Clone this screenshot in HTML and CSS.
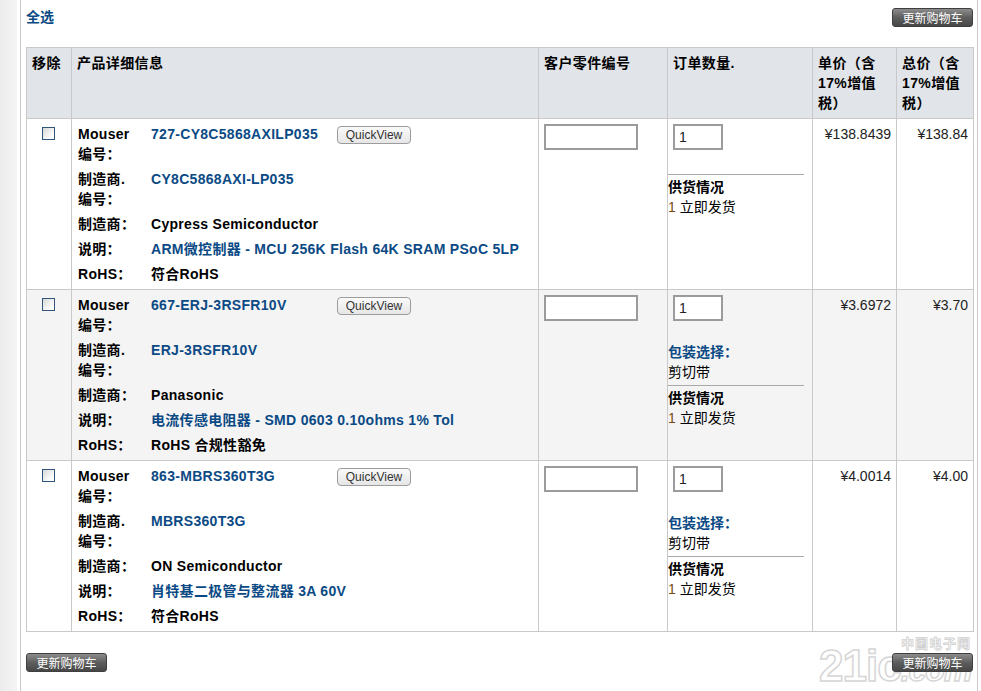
FILE: index.html
```html
<!DOCTYPE html>
<html lang="zh-CN">
<head>
<meta charset="utf-8">
<title>购物车</title>
<link rel="stylesheet" href="styles.css">
</head>
<body>
<div class="shell">
  <div class="side"></div>
  <div class="page">
    <div class="topbar">
      <a class="selall" href="#">全选</a>
      <button class="upd">更新购物车</button>
    </div>
    <table class="cart">
      <colgroup>
        <col class="c1"><col class="c2"><col class="c3"><col class="c4"><col class="c5"><col class="c6">
      </colgroup>
      <thead>
        <tr>
          <th>移除</th>
          <th>产品详细信息</th>
          <th>客户零件编号</th>
          <th>订单数量.</th>
          <th>单价（含17%增值税）</th>
          <th>总价（含17%增值税）</th>
        </tr>
      </thead>
      <tbody>
        <tr>
          <td class="sel"><input type="checkbox" class="chk"></td>
          <td class="info">
            <div class="det">
              <span class="lbl">Mouser <span class="nw">编号：</span></span>
              <a class="val" href="#">727-CY8C5868AXILP035</a>
              <span class="qvcell"><button class="qv">QuickView</button></span>
              <span class="lbl"><span class="nw">制造商.</span> <span class="nw">编号：</span></span>
              <a class="val wide" href="#">CY8C5868AXI-LP035</a>
              <span class="lbl">制造商：</span>
              <span class="txt wide">Cypress Semiconductor</span>
              <span class="lbl">说明：</span>
              <a class="val wide" href="#">ARM微控制器 - MCU 256K Flash 64K SRAM PSoC 5LP</a>
              <span class="lbl">RoHS：</span>
              <span class="txt wide">符合RoHS</span>
            </div>
          </td>
          <td class="cpn"><input type="text" class="cpn-in"></td>
          <td class="qty">
            <div class="qtybox"><input type="text" class="qty-in" value="1"></div>
            <hr class="sep">
            <div class="avail-h">供货情况</div>
            <div class="avail"><span class="num">1</span> 立即发货</div>
          </td>
          <td class="price">¥138.8439</td>
          <td class="price">¥138.84</td>
        </tr>
        <tr class="alt">
          <td class="sel"><input type="checkbox" class="chk"></td>
          <td class="info">
            <div class="det">
              <span class="lbl">Mouser <span class="nw">编号：</span></span>
              <a class="val" href="#">667-ERJ-3RSFR10V</a>
              <span class="qvcell"><button class="qv">QuickView</button></span>
              <span class="lbl"><span class="nw">制造商.</span> <span class="nw">编号：</span></span>
              <a class="val wide" href="#">ERJ-3RSFR10V</a>
              <span class="lbl">制造商：</span>
              <span class="txt wide">Panasonic</span>
              <span class="lbl">说明：</span>
              <a class="val wide" href="#">电流传感电阻器 - SMD 0603 0.10ohms 1% Tol</a>
              <span class="lbl">RoHS：</span>
              <span class="txt wide">RoHS 合规性豁免</span>
            </div>
          </td>
          <td class="cpn"><input type="text" class="cpn-in"></td>
          <td class="qty">
            <div class="qtybox"><input type="text" class="qty-in" value="1"></div>
            <div class="pack-h">包装选择：</div>
            <div class="pack">剪切带</div>
            <hr class="sep">
            <div class="avail-h">供货情况</div>
            <div class="avail"><span class="num">1</span> 立即发货</div>
          </td>
          <td class="price">¥3.6972</td>
          <td class="price">¥3.70</td>
        </tr>
        <tr>
          <td class="sel"><input type="checkbox" class="chk"></td>
          <td class="info">
            <div class="det">
              <span class="lbl">Mouser <span class="nw">编号：</span></span>
              <a class="val" href="#">863-MBRS360T3G</a>
              <span class="qvcell"><button class="qv">QuickView</button></span>
              <span class="lbl"><span class="nw">制造商.</span> <span class="nw">编号：</span></span>
              <a class="val wide" href="#">MBRS360T3G</a>
              <span class="lbl">制造商：</span>
              <span class="txt wide">ON Semiconductor</span>
              <span class="lbl">说明：</span>
              <a class="val wide" href="#">肖特基二极管与整流器 3A 60V</a>
              <span class="lbl">RoHS：</span>
              <span class="txt wide">符合RoHS</span>
            </div>
          </td>
          <td class="cpn"><input type="text" class="cpn-in"></td>
          <td class="qty">
            <div class="qtybox"><input type="text" class="qty-in" value="1"></div>
            <div class="pack-h">包装选择：</div>
            <div class="pack">剪切带</div>
            <hr class="sep">
            <div class="avail-h">供货情况</div>
            <div class="avail"><span class="num">1</span> 立即发货</div>
          </td>
          <td class="price">¥4.0014</td>
          <td class="price">¥4.00</td>
        </tr>
      </tbody>
    </table>
    <div class="bottombar">
      <button class="upd">更新购物车</button>
      <button class="upd">更新购物车</button>
    </div>
    <div class="watermark">
      <span class="wm-cn">中国电子网</span>
      <span class="wm-big">21ic<i>.com</i></span>
    </div>
  </div>
</div>
</body>
</html>
```

FILE: styles.css
```css
* { box-sizing: border-box; }

html, body {
  margin: 0;
  padding: 0;
  background: #fff;
}

body {
  font-family: "Liberation Sans", "Noto Sans CJK SC", sans-serif;
  font-size: 14px;
  color: #000;
}

.shell {
  display: flex;
  min-height: 691px;
}

.side {
  width: 17px;
  flex: none;
  background: linear-gradient(90deg, #ececec, #f4f4f4);
}

.page {
  position: relative;
  margin-left: 3px;
  width: 958px;
  flex: none;
  border-left: 1px solid #c9c9c9;
  border-right: 1px solid #c9c9c9;
  padding: 0 3px 0 5px;
  overflow: hidden;
}

.topbar {
  height: 47px;
  display: flex;
  justify-content: space-between;
  align-items: flex-start;
  padding-top: 8px;
  padding-right: 1px;
}

.selall {
  color: #0b4a85;
  font-weight: bold;
  text-decoration: none;
  line-height: 18px;
  font-size: 14px;
}

.upd {
  position: relative;
  z-index: 2;
  width: 81px;
  height: 19px;
  padding: 0;
  margin: 0;
  border: 1px solid #3f3f3f;
  border-radius: 3px;
  background: linear-gradient(#8c8c8c, #5e5e5e 50%, #474747);
  color: #fff;
  font-family: "Noto Sans CJK SC", sans-serif;
  font-size: 12px;
  line-height: 16px;
}

.cart {
  width: 948px;
  table-layout: fixed;
  border-collapse: collapse;
  border: 1px solid #c9c9c9;
}

.c1 { width: 45px; }
.c2 { width: 467px; }
.c3 { width: 129px; }
.c4 { width: 145px; }
.c5 { width: 84px; }
.c6 { width: 77px; }

.cart th {
  background: #e1e4e8;
  border: 1px solid #c9c9c9;
  text-align: left;
  vertical-align: top;
  font-weight: bold;
  line-height: 20px;
  padding: 5px 5px 5px 5px;
  font-size: 14px;
  letter-spacing: 0.4px;
}

.cart td {
  border: 1px solid #c9c9c9;
  vertical-align: top;
  padding: 5px;
  line-height: 20px;
}

.cart tr.alt td {
  background: #f4f4f4;
}

.cart td.sel {
  text-align: center;
  padding-left: 3px;
}

.chk {
  appearance: none;
  -webkit-appearance: none;
  width: 13px;
  height: 13px;
  margin: 3px 0 0 0;
  border: 1px solid #2f557c;
  background: linear-gradient(135deg, #d8d8d8, #ffffff 80%);
  display: inline-block;
  vertical-align: top;
}

.cart td.info {
  padding: 5px 5px 5px 6px;
}

.det {
  display: grid;
  grid-template-columns: 73px 186px 1fr;
  row-gap: 5px;
  line-height: 20px;
  font-weight: bold;
  letter-spacing: 0.3px;
}

.lbl {
  color: #000;
}

.nw {
  white-space: nowrap;
}

.val {
  color: #0b4a85;
  text-decoration: none;
}

.txt {
  color: #000;
}

.wide {
  grid-column: 2 / 4;
  white-space: nowrap;
}

.qvcell {
  align-self: start;
}

.qv {
  margin-top: 2px;
  width: 74px;
  height: 18px;
  padding: 0;
  border: 1px solid #9c9c9c;
  border-radius: 4px;
  background: linear-gradient(#fafafa, #e6e6e6);
  color: #333;
  font-family: "Liberation Sans", sans-serif;
  font-size: 12px;
  line-height: 16px;
  letter-spacing: 0;
  font-weight: normal;
}

.cpn-in {
  width: 94px;
  height: 26px;
  margin: 0;
  border: 2px solid #9b9b9b;
  background: #fff;
  display: block;
}

.cart td.qty {
  padding: 5px 8px 5px 0;
}

.qtybox {
  margin-left: 5px;
  padding-bottom: 21px;
}

.qty-in {
  width: 50px;
  height: 26px;
  margin: 0;
  border: 2px solid #9b9b9b;
  background: #fff;
  display: block;
  font-family: "Liberation Sans", sans-serif;
  font-size: 14px;
  padding: 0 4px;
  color: #222;
}

.pack-h {
  color: #0b4a85;
  font-weight: bold;
  line-height: 20px;
}

.pack {
  line-height: 20px;
}

.sep {
  border: 0;
  border-top: 1px solid #aaaaaa;
  height: 0;
  margin: 3px 0 2px 0;
}

.avail-h {
  font-weight: bold;
  line-height: 20px;
}

.avail {
  line-height: 20px;
}

.num {
  color: #7a4a10;
}

.cart td.price {
  text-align: right;
  color: #222;
  padding-right: 5px;
}

.bottombar {
  display: flex;
  justify-content: space-between;
  margin-top: 21px;
  padding-right: 1px;
}

.watermark {
  position: absolute;
  right: 2px;
  bottom: 0;
  z-index: 1;
  width: 160px;
  height: 56px;
  pointer-events: none;
}

.wm-cn {
  position: absolute;
  right: 4px;
  top: 0;
  font-family: "Noto Sans CJK SC", sans-serif;
  font-size: 13px;
  line-height: 16px;
  font-weight: bold;
  color: transparent;
  -webkit-text-stroke: 0.8px #cfcfcf;
  letter-spacing: 1px;
}

.wm-big {
  position: absolute;
  left: 4px;
  bottom: 0;
  font-family: "Liberation Sans", sans-serif;
  font-size: 44px;
  font-weight: bold;
  line-height: 42px;
  color: #fff;
  -webkit-text-stroke: 1.5px #d6d6d6;
  letter-spacing: -1px;
}

.wm-big i {
  font-size: 32px;
  font-style: italic;
}
```
